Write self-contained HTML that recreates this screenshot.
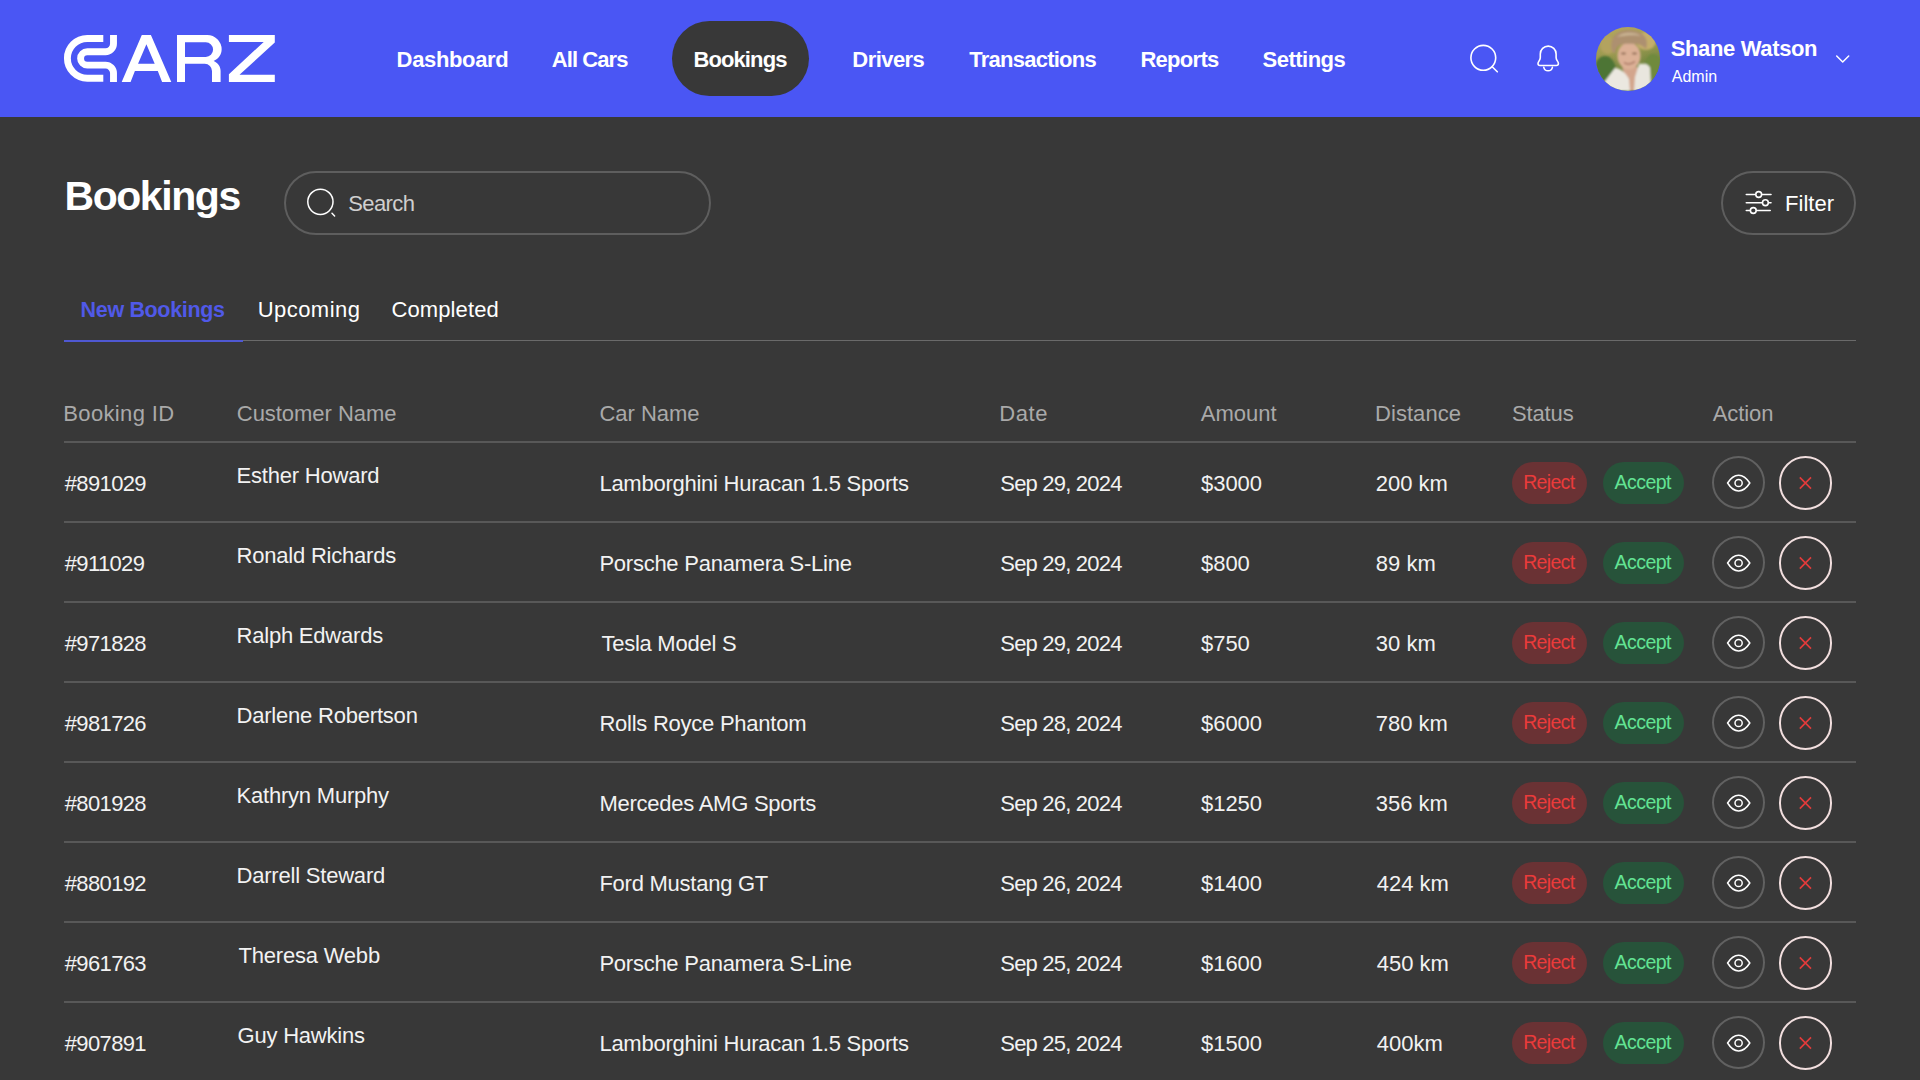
<!DOCTYPE html>
<html><head><meta charset="utf-8"><title>Bookings</title>
<style>
html,body{margin:0;padding:0}
body{width:1920px;height:1080px;overflow:hidden;background:#383838;position:relative;font-family:"Liberation Sans", sans-serif}
#hdr{position:absolute;left:0;top:0;width:1920px;height:117px;background:#4a56f4}
.abs{position:absolute}
.t{position:absolute;white-space:nowrap}
.pill{border-radius:21px}
svg.abs{overflow:visible}
</style></head><body>
<div id="hdr"></div>
<svg class="abs" style="left:0;top:0" width="300" height="117" viewBox="0 0 300 117">
<g fill="none" stroke="#fff" stroke-width="6.9">
<path d="M103.3 38.45 H87.3 A19.9 19.9 0 0 0 87.3 78.25 H103.3"/>
<path d="M113.5 35 V43.7 A8 8 0 0 1 105.5 51.7 H87.3 A6.7 6.7 0 0 0 87.3 65.1 H105.5 A8 8 0 0 1 113.5 73.1 V81.9"/>
</g>
<path fill="#fff" d="M121.7 81.9 L141.8 34.9 H150.9 L171.3 81.9 H162.1 L157.8 71 H134.9 L130.6 81.9 Z M146.4 44.3 L138.05 63.8 H154.7 Z" fill-rule="evenodd"/>
<path fill="#fff" fill-rule="evenodd" d="M177 81.9 V34.9 H207.2 A14.45 14.45 0 0 1 221.65 49.35 C221.65 54.5 218.6 58.9 213.6 61.1 C217.9 62.9 220.6 66.6 220.6 71 V81.9 H212 V71 A7.2 7.2 0 0 0 204.8 63.8 H185 V81.9 Z M185 42.3 H205.8 A7.3 7.3 0 0 1 205.8 56.9 H185 Z"/>
<path fill="#fff" d="M228.9 35 H274.8 V42.5 L239.5 74.7 H274.8 V81.9 H228.9 V74.2 L263.7 41.9 H228.9 Z"/>
</svg>
<div class="abs" style="left:672px;top:21px;width:137px;height:75px;border-radius:38px;background:#383838"></div>
<div class="t" style="left:396.60px;top:48.80px;font-size:22px;line-height:22px;font-weight:700;color:#fff;letter-spacing:-0.350px;">Dashboard</div>
<div class="t" style="left:551.80px;top:48.80px;font-size:22px;line-height:22px;font-weight:700;color:#fff;letter-spacing:-0.929px;">All Cars</div>
<div class="t" style="left:693.40px;top:48.80px;font-size:22px;line-height:22px;font-weight:700;color:#fff;letter-spacing:-0.886px;">Bookings</div>
<div class="t" style="left:852.30px;top:48.80px;font-size:22px;line-height:22px;font-weight:700;color:#fff;letter-spacing:-0.550px;">Drivers</div>
<div class="t" style="left:969.30px;top:48.80px;font-size:22px;line-height:22px;font-weight:700;color:#fff;letter-spacing:-0.755px;">Transactions</div>
<div class="t" style="left:1140.40px;top:48.80px;font-size:22px;line-height:22px;font-weight:700;color:#fff;letter-spacing:-0.700px;">Reports</div>
<div class="t" style="left:1262.60px;top:48.80px;font-size:22px;line-height:22px;font-weight:700;color:#fff;letter-spacing:-0.514px;">Settings</div>
<svg class="abs" style="left:1440px;top:20px" width="140" height="70" viewBox="1440 20 140 70">
<g fill="none" stroke="#fff" stroke-width="1.6" stroke-linecap="round">
<circle cx="1483.3" cy="57.8" r="12.4"/>
<path d="M1492.2 66.7 L1497.3 71.8"/>
<path d="M1538 63.5 C1538 61.5 1540.3 60.5 1540.3 57.5 V54 A7.9 7.9 0 0 1 1556.1 54 V57.5 C1556.1 60.5 1558.4 61.5 1558.4 63.5 A2 2 0 0 1 1556.4 65.5 H1540 A2 2 0 0 1 1538 63.5 Z"/>
<path d="M1543.8 67.3 A4.4 4.4 0 0 0 1552.4 67.3"/>
</g></svg>
<svg class="abs" style="left:1596px;top:26.5px" width="64" height="64" viewBox="0 0 64 64">
<defs><clipPath id="av"><circle cx="32" cy="32" r="32"/></clipPath>
<linearGradient id="bg" x1="0" y1="0" x2="0.3" y2="1"><stop offset="0" stop-color="#b9a862"/><stop offset="0.45" stop-color="#9c9a50"/><stop offset="1" stop-color="#4f7434"/></linearGradient>
<filter id="bl" x="-10%" y="-10%" width="120%" height="120%"><feGaussianBlur stdDeviation="0.9"/></filter></defs>
<g clip-path="url(#av)">
<rect width="64" height="64" fill="url(#bg)"/>
<g filter="url(#bl)">
<ellipse cx="9" cy="44" rx="11" ry="15" fill="#4d7434"/>
<ellipse cx="57" cy="42" rx="9" ry="15" fill="#6f8a3c"/>
<ellipse cx="50" cy="14" rx="10" ry="9" fill="#c4ae6c"/>
<ellipse cx="12" cy="18" rx="8" ry="9" fill="#b3a35e"/>
<path d="M26 40 L42 40 L40 64 L33 64 Z" fill="#d3a58c"/>
<ellipse cx="33" cy="29" rx="11.5" ry="13.5" fill="#dcb096"/>
<ellipse cx="27.5" cy="26.5" rx="2.6" ry="1.1" fill="#8a6650"/>
<ellipse cx="38.5" cy="26.5" rx="2.6" ry="1.1" fill="#8a6650"/>
<path d="M28 35.5 Q33 39 39 34.5" stroke="#a06a5a" stroke-width="1.2" fill="none"/>
<path d="M16 24 C13 12 20 3 32 3 C45 3 54 10 50 22 C47 19 44 17 40 17 C34 17 27 16 22 19 C20 21 19 24 19 27 Z" fill="#ad9070"/>
<path d="M21 10 C26 5 38 4 45 9 C40 8 30 8 21 10 Z" fill="#cbb594"/>
<path d="M6 58 L19 41 C24 41 29 45 33 52 L34 64 L5 64 Z" fill="#ebe8e0"/>
<path d="M39 50 L43 37 C48 36 53 37 54 41 L55 58 L45 64 L38 64 Z" fill="#e9e6de"/>
</g></g></svg>
<div class="t" style="left:1670.70px;top:37.80px;font-size:22px;line-height:22px;font-weight:700;color:#fff;letter-spacing:-0.355px;">Shane Watson</div>
<div class="t" style="left:1671.70px;top:68.60px;font-size:16px;line-height:16px;font-weight:400;color:#fff;letter-spacing:0.050px;">Admin</div>
<svg class="abs" style="left:1830px;top:50px" width="24" height="20" viewBox="1830 50 24 20">
<path d="M1836.7 56 L1842.7 62 L1848.7 56" fill="none" stroke="#fff" stroke-width="1.5" stroke-linecap="round" stroke-linejoin="round"/></svg>
<div class="t" style="left:64.50px;top:175.60px;font-size:41px;line-height:41px;font-weight:700;color:#fff;letter-spacing:-1.443px;">Bookings</div>
<div class="abs" style="left:284px;top:170.5px;width:427px;height:64px;box-sizing:border-box;border:2px solid #5e5e5e;border-radius:32px"></div>
<svg class="abs" style="left:300px;top:180px" width="40" height="40" viewBox="300 180 40 40">
<g fill="none" stroke="#fff" stroke-width="1.5" stroke-linecap="round"><circle cx="320.4" cy="201.8" r="12.6"/><path d="M332 213.3 L334.6 216"/></g></svg>
<div class="t" style="left:348.20px;top:192.80px;font-size:22px;line-height:22px;font-weight:400;color:#cfcfcf;letter-spacing:-0.580px;">Search</div>
<div class="abs" style="left:1721px;top:170.5px;width:135px;height:64px;box-sizing:border-box;border:2px solid #5e5e5e;border-radius:32px"></div>
<svg class="abs" style="left:1740px;top:185px" width="40" height="35" viewBox="1740 185 40 35">
<g fill="none" stroke="#fff" stroke-width="1.6" stroke-linecap="round">
<path d="M1746.3 194.5 H1755.3 M1762.1 194.5 H1771 M1746.3 202.7 H1762 M1768.8 202.7 H1771 M1746.3 210.5 H1750 M1756.6 210.5 H1770.2"/>
<circle cx="1758.7" cy="194.5" r="2.9"/><circle cx="1765.4" cy="202.7" r="2.9"/><circle cx="1753.3" cy="210.5" r="2.9"/>
</g></svg>
<div class="t" style="left:1785.10px;top:192.80px;font-size:22px;line-height:22px;font-weight:400;color:#fff;letter-spacing:0.000px;">Filter</div>
<div class="t" style="left:80.60px;top:300.10px;font-size:21.5px;line-height:21.5px;font-weight:700;color:#5059e8;letter-spacing:-0.345px;">New Bookings</div>
<div class="t" style="left:257.70px;top:299.20px;font-size:22px;line-height:22px;font-weight:400;color:#fff;letter-spacing:0.457px;">Upcoming</div>
<div class="t" style="left:391.40px;top:299.20px;font-size:22px;line-height:22px;font-weight:400;color:#fff;letter-spacing:0.125px;">Completed</div>
<div class="abs" style="left:64px;top:340px;width:1792px;height:1px;background:#6a6a6a"></div>
<div class="abs" style="left:64px;top:339.6px;width:179px;height:2px;background:#4f58d2"></div>
<div class="t" style="left:63.30px;top:403.00px;font-size:22px;line-height:22px;font-weight:400;color:#a9a9a9;letter-spacing:0.356px;">Booking ID</div>
<div class="t" style="left:236.80px;top:403.00px;font-size:22px;line-height:22px;font-weight:400;color:#a9a9a9;letter-spacing:-0.042px;">Customer Name</div>
<div class="t" style="left:599.50px;top:403.00px;font-size:22px;line-height:22px;font-weight:400;color:#a9a9a9;letter-spacing:-0.036px;">Car Name</div>
<div class="t" style="left:999.25px;top:403.00px;font-size:22px;line-height:22px;font-weight:400;color:#a9a9a9;letter-spacing:0.583px;">Date</div>
<div class="t" style="left:1200.80px;top:403.00px;font-size:22px;line-height:22px;font-weight:400;color:#a9a9a9;letter-spacing:0.020px;">Amount</div>
<div class="t" style="left:1375.00px;top:403.00px;font-size:22px;line-height:22px;font-weight:400;color:#a9a9a9;letter-spacing:0.057px;">Distance</div>
<div class="t" style="left:1511.90px;top:403.00px;font-size:22px;line-height:22px;font-weight:400;color:#a9a9a9;letter-spacing:-0.120px;">Status</div>
<div class="t" style="left:1712.80px;top:403.00px;font-size:22px;line-height:22px;font-weight:400;color:#a9a9a9;letter-spacing:-0.100px;">Action</div>
<div class="abs" style="left:64px;top:441px;width:1792px;height:2px;background:#585858"></div>
<div class="t" style="left:64.75px;top:472.80px;font-size:22px;line-height:22px;font-weight:400;color:#f2f2f2;letter-spacing:-0.638px;">#891029</div>
<div class="t" style="left:236.50px;top:464.80px;font-size:22px;line-height:22px;font-weight:400;color:#f2f2f2;letter-spacing:-0.205px;">Esther Howard</div>
<div class="t" style="left:599.40px;top:472.80px;font-size:22px;line-height:22px;font-weight:400;color:#f2f2f2;letter-spacing:-0.248px;">Lamborghini Huracan 1.5 Sports</div>
<div class="t" style="left:1000.25px;top:472.80px;font-size:22px;line-height:22px;font-weight:400;color:#f2f2f2;letter-spacing:-0.795px;">Sep 29, 2024</div>
<div class="t" style="left:1201.00px;top:472.80px;font-size:22px;line-height:22px;font-weight:400;color:#f2f2f2;letter-spacing:-0.038px;">$3000</div>
<div class="t" style="left:1375.80px;top:472.80px;font-size:22px;line-height:22px;font-weight:400;color:#f2f2f2;letter-spacing:0.000px;">200 km</div>
<div class="abs pill" style="left:1512px;top:461.5px;width:74.5px;height:42px;background:#6a3234"></div>
<div class="t" style="left:1523.20px;top:473.40px;font-size:19.5px;line-height:19.5px;font-weight:400;color:#ea3b3b;letter-spacing:-0.680px;">Reject</div>
<div class="abs pill" style="left:1602.5px;top:461.5px;width:81.5px;height:42px;background:#27533a"></div>
<div class="t" style="left:1614.60px;top:473.40px;font-size:19.5px;line-height:19.5px;font-weight:400;color:#63e394;letter-spacing:-0.540px;">Accept</div>
<div class="abs" style="left:1712px;top:456.0px;width:53px;height:53px;box-sizing:border-box;border:2px solid #616161;border-radius:50%"></div>
<div class="abs" style="left:1778.5px;top:456.0px;width:53.5px;height:53.5px;box-sizing:border-box;border:2px solid #f1dede;border-radius:50%"></div>
<svg class="abs" style="left:1720px;top:462.5px" width="40" height="40" viewBox="1720 462.5 40 40">
<g fill="none" stroke="#fff" stroke-width="1.5"><path d="M1727.6 482.5 C1734 472.0 1743.2 472.0 1749.8 482.5 C1743.2 493.0 1734 493.0 1727.6 482.5 Z"/><circle cx="1738.6" cy="482.5" r="3.6"/></g>
<g stroke="#e23b3b" stroke-width="1.6"><path d="M1799.8 476.9 L1811 488.1 M1811 476.9 L1799.8 488.1"/></g></svg>
<div class="abs" style="left:64px;top:521px;width:1792px;height:2px;background:#585858"></div>
<div class="t" style="left:64.75px;top:552.80px;font-size:22px;line-height:22px;font-weight:400;color:#f2f2f2;letter-spacing:-0.638px;">#911029</div>
<div class="t" style="left:236.50px;top:544.80px;font-size:22px;line-height:22px;font-weight:400;color:#f2f2f2;letter-spacing:-0.205px;">Ronald Richards</div>
<div class="t" style="left:599.40px;top:552.80px;font-size:22px;line-height:22px;font-weight:400;color:#f2f2f2;letter-spacing:-0.248px;">Porsche Panamera S-Line</div>
<div class="t" style="left:1000.25px;top:552.80px;font-size:22px;line-height:22px;font-weight:400;color:#f2f2f2;letter-spacing:-0.795px;">Sep 29, 2024</div>
<div class="t" style="left:1201.00px;top:552.80px;font-size:22px;line-height:22px;font-weight:400;color:#f2f2f2;letter-spacing:-0.038px;">$800</div>
<div class="t" style="left:1375.80px;top:552.80px;font-size:22px;line-height:22px;font-weight:400;color:#f2f2f2;letter-spacing:0.000px;">89 km</div>
<div class="abs pill" style="left:1512px;top:541.5px;width:74.5px;height:42px;background:#6a3234"></div>
<div class="t" style="left:1523.20px;top:553.40px;font-size:19.5px;line-height:19.5px;font-weight:400;color:#ea3b3b;letter-spacing:-0.680px;">Reject</div>
<div class="abs pill" style="left:1602.5px;top:541.5px;width:81.5px;height:42px;background:#27533a"></div>
<div class="t" style="left:1614.60px;top:553.40px;font-size:19.5px;line-height:19.5px;font-weight:400;color:#63e394;letter-spacing:-0.540px;">Accept</div>
<div class="abs" style="left:1712px;top:536.0px;width:53px;height:53px;box-sizing:border-box;border:2px solid #616161;border-radius:50%"></div>
<div class="abs" style="left:1778.5px;top:536.0px;width:53.5px;height:53.5px;box-sizing:border-box;border:2px solid #f1dede;border-radius:50%"></div>
<svg class="abs" style="left:1720px;top:542.5px" width="40" height="40" viewBox="1720 542.5 40 40">
<g fill="none" stroke="#fff" stroke-width="1.5"><path d="M1727.6 562.5 C1734 552.0 1743.2 552.0 1749.8 562.5 C1743.2 573.0 1734 573.0 1727.6 562.5 Z"/><circle cx="1738.6" cy="562.5" r="3.6"/></g>
<g stroke="#e23b3b" stroke-width="1.6"><path d="M1799.8 556.9 L1811 568.1 M1811 556.9 L1799.8 568.1"/></g></svg>
<div class="abs" style="left:64px;top:601px;width:1792px;height:2px;background:#585858"></div>
<div class="t" style="left:64.75px;top:632.80px;font-size:22px;line-height:22px;font-weight:400;color:#f2f2f2;letter-spacing:-0.638px;">#971828</div>
<div class="t" style="left:236.50px;top:624.80px;font-size:22px;line-height:22px;font-weight:400;color:#f2f2f2;letter-spacing:-0.205px;">Ralph Edwards</div>
<div class="t" style="left:601.40px;top:632.80px;font-size:22px;line-height:22px;font-weight:400;color:#f2f2f2;letter-spacing:-0.248px;">Tesla Model S</div>
<div class="t" style="left:1000.25px;top:632.80px;font-size:22px;line-height:22px;font-weight:400;color:#f2f2f2;letter-spacing:-0.795px;">Sep 29, 2024</div>
<div class="t" style="left:1201.00px;top:632.80px;font-size:22px;line-height:22px;font-weight:400;color:#f2f2f2;letter-spacing:-0.038px;">$750</div>
<div class="t" style="left:1375.80px;top:632.80px;font-size:22px;line-height:22px;font-weight:400;color:#f2f2f2;letter-spacing:0.000px;">30 km</div>
<div class="abs pill" style="left:1512px;top:621.5px;width:74.5px;height:42px;background:#6a3234"></div>
<div class="t" style="left:1523.20px;top:633.40px;font-size:19.5px;line-height:19.5px;font-weight:400;color:#ea3b3b;letter-spacing:-0.680px;">Reject</div>
<div class="abs pill" style="left:1602.5px;top:621.5px;width:81.5px;height:42px;background:#27533a"></div>
<div class="t" style="left:1614.60px;top:633.40px;font-size:19.5px;line-height:19.5px;font-weight:400;color:#63e394;letter-spacing:-0.540px;">Accept</div>
<div class="abs" style="left:1712px;top:616.0px;width:53px;height:53px;box-sizing:border-box;border:2px solid #616161;border-radius:50%"></div>
<div class="abs" style="left:1778.5px;top:616.0px;width:53.5px;height:53.5px;box-sizing:border-box;border:2px solid #f1dede;border-radius:50%"></div>
<svg class="abs" style="left:1720px;top:622.5px" width="40" height="40" viewBox="1720 622.5 40 40">
<g fill="none" stroke="#fff" stroke-width="1.5"><path d="M1727.6 642.5 C1734 632.0 1743.2 632.0 1749.8 642.5 C1743.2 653.0 1734 653.0 1727.6 642.5 Z"/><circle cx="1738.6" cy="642.5" r="3.6"/></g>
<g stroke="#e23b3b" stroke-width="1.6"><path d="M1799.8 636.9 L1811 648.1 M1811 636.9 L1799.8 648.1"/></g></svg>
<div class="abs" style="left:64px;top:681px;width:1792px;height:2px;background:#585858"></div>
<div class="t" style="left:64.75px;top:712.80px;font-size:22px;line-height:22px;font-weight:400;color:#f2f2f2;letter-spacing:-0.638px;">#981726</div>
<div class="t" style="left:236.50px;top:704.80px;font-size:22px;line-height:22px;font-weight:400;color:#f2f2f2;letter-spacing:-0.205px;">Darlene Robertson</div>
<div class="t" style="left:599.40px;top:712.80px;font-size:22px;line-height:22px;font-weight:400;color:#f2f2f2;letter-spacing:-0.248px;">Rolls Royce Phantom</div>
<div class="t" style="left:1000.25px;top:712.80px;font-size:22px;line-height:22px;font-weight:400;color:#f2f2f2;letter-spacing:-0.795px;">Sep 28, 2024</div>
<div class="t" style="left:1201.00px;top:712.80px;font-size:22px;line-height:22px;font-weight:400;color:#f2f2f2;letter-spacing:-0.038px;">$6000</div>
<div class="t" style="left:1375.80px;top:712.80px;font-size:22px;line-height:22px;font-weight:400;color:#f2f2f2;letter-spacing:0.000px;">780 km</div>
<div class="abs pill" style="left:1512px;top:701.5px;width:74.5px;height:42px;background:#6a3234"></div>
<div class="t" style="left:1523.20px;top:713.40px;font-size:19.5px;line-height:19.5px;font-weight:400;color:#ea3b3b;letter-spacing:-0.680px;">Reject</div>
<div class="abs pill" style="left:1602.5px;top:701.5px;width:81.5px;height:42px;background:#27533a"></div>
<div class="t" style="left:1614.60px;top:713.40px;font-size:19.5px;line-height:19.5px;font-weight:400;color:#63e394;letter-spacing:-0.540px;">Accept</div>
<div class="abs" style="left:1712px;top:696.0px;width:53px;height:53px;box-sizing:border-box;border:2px solid #616161;border-radius:50%"></div>
<div class="abs" style="left:1778.5px;top:696.0px;width:53.5px;height:53.5px;box-sizing:border-box;border:2px solid #f1dede;border-radius:50%"></div>
<svg class="abs" style="left:1720px;top:702.5px" width="40" height="40" viewBox="1720 702.5 40 40">
<g fill="none" stroke="#fff" stroke-width="1.5"><path d="M1727.6 722.5 C1734 712.0 1743.2 712.0 1749.8 722.5 C1743.2 733.0 1734 733.0 1727.6 722.5 Z"/><circle cx="1738.6" cy="722.5" r="3.6"/></g>
<g stroke="#e23b3b" stroke-width="1.6"><path d="M1799.8 716.9 L1811 728.1 M1811 716.9 L1799.8 728.1"/></g></svg>
<div class="abs" style="left:64px;top:761px;width:1792px;height:2px;background:#585858"></div>
<div class="t" style="left:64.75px;top:792.80px;font-size:22px;line-height:22px;font-weight:400;color:#f2f2f2;letter-spacing:-0.638px;">#801928</div>
<div class="t" style="left:236.50px;top:784.80px;font-size:22px;line-height:22px;font-weight:400;color:#f2f2f2;letter-spacing:-0.205px;">Kathryn Murphy</div>
<div class="t" style="left:599.40px;top:792.80px;font-size:22px;line-height:22px;font-weight:400;color:#f2f2f2;letter-spacing:-0.248px;">Mercedes AMG Sports</div>
<div class="t" style="left:1000.25px;top:792.80px;font-size:22px;line-height:22px;font-weight:400;color:#f2f2f2;letter-spacing:-0.795px;">Sep 26, 2024</div>
<div class="t" style="left:1201.00px;top:792.80px;font-size:22px;line-height:22px;font-weight:400;color:#f2f2f2;letter-spacing:-0.038px;">$1250</div>
<div class="t" style="left:1375.80px;top:792.80px;font-size:22px;line-height:22px;font-weight:400;color:#f2f2f2;letter-spacing:0.000px;">356 km</div>
<div class="abs pill" style="left:1512px;top:781.5px;width:74.5px;height:42px;background:#6a3234"></div>
<div class="t" style="left:1523.20px;top:793.40px;font-size:19.5px;line-height:19.5px;font-weight:400;color:#ea3b3b;letter-spacing:-0.680px;">Reject</div>
<div class="abs pill" style="left:1602.5px;top:781.5px;width:81.5px;height:42px;background:#27533a"></div>
<div class="t" style="left:1614.60px;top:793.40px;font-size:19.5px;line-height:19.5px;font-weight:400;color:#63e394;letter-spacing:-0.540px;">Accept</div>
<div class="abs" style="left:1712px;top:776.0px;width:53px;height:53px;box-sizing:border-box;border:2px solid #616161;border-radius:50%"></div>
<div class="abs" style="left:1778.5px;top:776.0px;width:53.5px;height:53.5px;box-sizing:border-box;border:2px solid #f1dede;border-radius:50%"></div>
<svg class="abs" style="left:1720px;top:782.5px" width="40" height="40" viewBox="1720 782.5 40 40">
<g fill="none" stroke="#fff" stroke-width="1.5"><path d="M1727.6 802.5 C1734 792.0 1743.2 792.0 1749.8 802.5 C1743.2 813.0 1734 813.0 1727.6 802.5 Z"/><circle cx="1738.6" cy="802.5" r="3.6"/></g>
<g stroke="#e23b3b" stroke-width="1.6"><path d="M1799.8 796.9 L1811 808.1 M1811 796.9 L1799.8 808.1"/></g></svg>
<div class="abs" style="left:64px;top:841px;width:1792px;height:2px;background:#585858"></div>
<div class="t" style="left:64.75px;top:872.80px;font-size:22px;line-height:22px;font-weight:400;color:#f2f2f2;letter-spacing:-0.638px;">#880192</div>
<div class="t" style="left:236.50px;top:864.80px;font-size:22px;line-height:22px;font-weight:400;color:#f2f2f2;letter-spacing:-0.205px;">Darrell Steward</div>
<div class="t" style="left:599.40px;top:872.80px;font-size:22px;line-height:22px;font-weight:400;color:#f2f2f2;letter-spacing:-0.248px;">Ford Mustang GT</div>
<div class="t" style="left:1000.25px;top:872.80px;font-size:22px;line-height:22px;font-weight:400;color:#f2f2f2;letter-spacing:-0.795px;">Sep 26, 2024</div>
<div class="t" style="left:1201.00px;top:872.80px;font-size:22px;line-height:22px;font-weight:400;color:#f2f2f2;letter-spacing:-0.038px;">$1400</div>
<div class="t" style="left:1376.80px;top:872.80px;font-size:22px;line-height:22px;font-weight:400;color:#f2f2f2;letter-spacing:0.000px;">424 km</div>
<div class="abs pill" style="left:1512px;top:861.5px;width:74.5px;height:42px;background:#6a3234"></div>
<div class="t" style="left:1523.20px;top:873.40px;font-size:19.5px;line-height:19.5px;font-weight:400;color:#ea3b3b;letter-spacing:-0.680px;">Reject</div>
<div class="abs pill" style="left:1602.5px;top:861.5px;width:81.5px;height:42px;background:#27533a"></div>
<div class="t" style="left:1614.60px;top:873.40px;font-size:19.5px;line-height:19.5px;font-weight:400;color:#63e394;letter-spacing:-0.540px;">Accept</div>
<div class="abs" style="left:1712px;top:856.0px;width:53px;height:53px;box-sizing:border-box;border:2px solid #616161;border-radius:50%"></div>
<div class="abs" style="left:1778.5px;top:856.0px;width:53.5px;height:53.5px;box-sizing:border-box;border:2px solid #f1dede;border-radius:50%"></div>
<svg class="abs" style="left:1720px;top:862.5px" width="40" height="40" viewBox="1720 862.5 40 40">
<g fill="none" stroke="#fff" stroke-width="1.5"><path d="M1727.6 882.5 C1734 872.0 1743.2 872.0 1749.8 882.5 C1743.2 893.0 1734 893.0 1727.6 882.5 Z"/><circle cx="1738.6" cy="882.5" r="3.6"/></g>
<g stroke="#e23b3b" stroke-width="1.6"><path d="M1799.8 876.9 L1811 888.1 M1811 876.9 L1799.8 888.1"/></g></svg>
<div class="abs" style="left:64px;top:921px;width:1792px;height:2px;background:#585858"></div>
<div class="t" style="left:64.75px;top:952.80px;font-size:22px;line-height:22px;font-weight:400;color:#f2f2f2;letter-spacing:-0.638px;">#961763</div>
<div class="t" style="left:238.50px;top:944.80px;font-size:22px;line-height:22px;font-weight:400;color:#f2f2f2;letter-spacing:-0.205px;">Theresa Webb</div>
<div class="t" style="left:599.40px;top:952.80px;font-size:22px;line-height:22px;font-weight:400;color:#f2f2f2;letter-spacing:-0.248px;">Porsche Panamera S-Line</div>
<div class="t" style="left:1000.25px;top:952.80px;font-size:22px;line-height:22px;font-weight:400;color:#f2f2f2;letter-spacing:-0.795px;">Sep 25, 2024</div>
<div class="t" style="left:1201.00px;top:952.80px;font-size:22px;line-height:22px;font-weight:400;color:#f2f2f2;letter-spacing:-0.038px;">$1600</div>
<div class="t" style="left:1376.80px;top:952.80px;font-size:22px;line-height:22px;font-weight:400;color:#f2f2f2;letter-spacing:0.000px;">450 km</div>
<div class="abs pill" style="left:1512px;top:941.5px;width:74.5px;height:42px;background:#6a3234"></div>
<div class="t" style="left:1523.20px;top:953.40px;font-size:19.5px;line-height:19.5px;font-weight:400;color:#ea3b3b;letter-spacing:-0.680px;">Reject</div>
<div class="abs pill" style="left:1602.5px;top:941.5px;width:81.5px;height:42px;background:#27533a"></div>
<div class="t" style="left:1614.60px;top:953.40px;font-size:19.5px;line-height:19.5px;font-weight:400;color:#63e394;letter-spacing:-0.540px;">Accept</div>
<div class="abs" style="left:1712px;top:936.0px;width:53px;height:53px;box-sizing:border-box;border:2px solid #616161;border-radius:50%"></div>
<div class="abs" style="left:1778.5px;top:936.0px;width:53.5px;height:53.5px;box-sizing:border-box;border:2px solid #f1dede;border-radius:50%"></div>
<svg class="abs" style="left:1720px;top:942.5px" width="40" height="40" viewBox="1720 942.5 40 40">
<g fill="none" stroke="#fff" stroke-width="1.5"><path d="M1727.6 962.5 C1734 952.0 1743.2 952.0 1749.8 962.5 C1743.2 973.0 1734 973.0 1727.6 962.5 Z"/><circle cx="1738.6" cy="962.5" r="3.6"/></g>
<g stroke="#e23b3b" stroke-width="1.6"><path d="M1799.8 956.9 L1811 968.1 M1811 956.9 L1799.8 968.1"/></g></svg>
<div class="abs" style="left:64px;top:1001px;width:1792px;height:2px;background:#585858"></div>
<div class="t" style="left:64.75px;top:1032.80px;font-size:22px;line-height:22px;font-weight:400;color:#f2f2f2;letter-spacing:-0.638px;">#907891</div>
<div class="t" style="left:237.50px;top:1024.80px;font-size:22px;line-height:22px;font-weight:400;color:#f2f2f2;letter-spacing:-0.205px;">Guy Hawkins</div>
<div class="t" style="left:599.40px;top:1032.80px;font-size:22px;line-height:22px;font-weight:400;color:#f2f2f2;letter-spacing:-0.248px;">Lamborghini Huracan 1.5 Sports</div>
<div class="t" style="left:1000.25px;top:1032.80px;font-size:22px;line-height:22px;font-weight:400;color:#f2f2f2;letter-spacing:-0.795px;">Sep 25, 2024</div>
<div class="t" style="left:1201.00px;top:1032.80px;font-size:22px;line-height:22px;font-weight:400;color:#f2f2f2;letter-spacing:-0.038px;">$1500</div>
<div class="t" style="left:1376.80px;top:1032.80px;font-size:22px;line-height:22px;font-weight:400;color:#f2f2f2;letter-spacing:0.000px;">400km</div>
<div class="abs pill" style="left:1512px;top:1021.5px;width:74.5px;height:42px;background:#6a3234"></div>
<div class="t" style="left:1523.20px;top:1033.40px;font-size:19.5px;line-height:19.5px;font-weight:400;color:#ea3b3b;letter-spacing:-0.680px;">Reject</div>
<div class="abs pill" style="left:1602.5px;top:1021.5px;width:81.5px;height:42px;background:#27533a"></div>
<div class="t" style="left:1614.60px;top:1033.40px;font-size:19.5px;line-height:19.5px;font-weight:400;color:#63e394;letter-spacing:-0.540px;">Accept</div>
<div class="abs" style="left:1712px;top:1016.0px;width:53px;height:53px;box-sizing:border-box;border:2px solid #616161;border-radius:50%"></div>
<div class="abs" style="left:1778.5px;top:1016.0px;width:53.5px;height:53.5px;box-sizing:border-box;border:2px solid #f1dede;border-radius:50%"></div>
<svg class="abs" style="left:1720px;top:1022.5px" width="40" height="40" viewBox="1720 1022.5 40 40">
<g fill="none" stroke="#fff" stroke-width="1.5"><path d="M1727.6 1042.5 C1734 1032.0 1743.2 1032.0 1749.8 1042.5 C1743.2 1053.0 1734 1053.0 1727.6 1042.5 Z"/><circle cx="1738.6" cy="1042.5" r="3.6"/></g>
<g stroke="#e23b3b" stroke-width="1.6"><path d="M1799.8 1036.9 L1811 1048.1 M1811 1036.9 L1799.8 1048.1"/></g></svg>
</body></html>
